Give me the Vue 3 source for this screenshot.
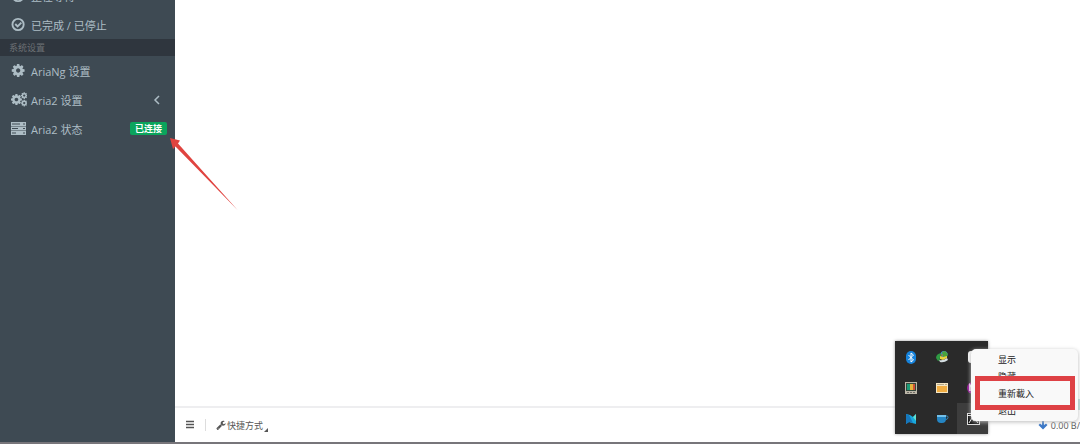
<template>
  <div class="page">
    <aside class="sidebar">
      <nav class="menu">
        <a v-for="item in taskItems" :key="item.label" href="#" class="menu-item">
          <svg class="icon" viewBox="0 0 16 16">
            <circle cx="7" cy="8" r="6" class="line" />
            <path :d="item.icon" class="line" />
          </svg>
          <span>{{ item.label }}</span>
        </a>
        <h2 class="menu-header">系统设置</h2>
        <a href="#" class="menu-item">
          <svg class="icon" viewBox="100 0 1792 1792"><path :d="cog" /></svg>
          <span>AriaNg 设置</span>
        </a>
        <a href="#" class="menu-item">
          <svg class="icon" viewBox="0 0 1920 1792">
            <path :d="cog" transform="translate(-120 130) scale(0.86)" />
            <path :d="cog" transform="translate(1120 -40) scale(0.52)" />
            <path :d="cog" transform="translate(1120 860) scale(0.52)" />
          </svg>
          <span>Aria2 设置</span>
          <svg class="angle" viewBox="0 0 8 10"><path d="M6 1 2 5l4 4" class="line" /></svg>
        </a>
        <a href="#" class="menu-item">
          <svg class="icon" viewBox="0 0 16 15">
            <path fill-rule="evenodd" d="M0 1h15v4H0zM1 2.500v1h8v-1zM12 2.500v1h2v-1zM0 5.500h15v4H0zM1 7v1h6V7zM12 7v1h2V7zM0 10h15v4H0zM1 11.500v1h4v-1zM12 11.500v1h2v-1z" />
          </svg>
          <span>Aria2 状态</span>
          <span class="badge">已连接</span>
        </a>
      </nav>
    </aside>

    <div class="main">
      <main class="content"></main>
      <footer class="toolbar">
        <button type="button" class="tool toggle" aria-label="菜单">
          <svg viewBox="0 0 10 10"><path d="M1 1.500h8M1 4.500h8M1 7.500h8" class="line" /></svg>
        </button>
        <button type="button" class="tool shortcut">
          <svg viewBox="0 0 1792 1792"><path :d="wrench" /></svg>
          <span>快捷方式</span>
          <i class="corner"></i>
        </button>
        <span class="speed">
          <svg viewBox="0 0 10 10"><path d="M4 1h2v4l2-1.500 1.500 1.500L5 9.500.5 5 2 3.500 4 5z" /></svg>
          <span>0.00 B/</span>
        </span>
      </footer>
    </div>

    <div class="tray">
      <button type="button" class="tray-item" aria-label="蓝牙">
        <svg viewBox="0 0 16 16">
          <rect x="3" y="2" width="10" height="13" rx="5" fill="#1683dc" />
          <path d="M5.500 6l5 5L8 13V4l2.500 2-5 5" fill="none" stroke="#fff" />
        </svg>
      </button>
      <button type="button" class="tray-item" aria-label="下载">
        <svg viewBox="0 0 16 16">
          <circle cx="10" cy="5.500" r="3.500" fill="#3f8fd0" />
          <path d="M8 3l3-1 3 3-2 4-3-1z" fill="#49a33c" />
          <path d="M2 9q0-4 5-5l1 3q-3 1-2 4l-2 1z" fill="#2f9a43" />
          <path d="M6 7l3 1 4-1v2l-4 2-3-1z" fill="#e8d23c" />
          <path d="M5 11q4 1 8-2l1 2q-4 3-8 2z" fill="#d5dfe2" />
          <path d="M7 5l2 1-1 1.500z" fill="#d56728" />
        </svg>
      </button>
      <button type="button" class="tray-item" aria-label="安全">
        <svg viewBox="0 0 16 16">
          <rect x="3" y="2" width="12" height="12" rx="3" fill="#f6f6f6" />
          <path d="M6 5h3M6 8h3M6 11h3" stroke="#555" />
        </svg>
      </button>
      <button type="button" class="tray-item" aria-label="显示器">
        <svg viewBox="0 0 16 16">
          <rect x="2" y="2" width="12" height="12" fill="#bcb6a8" />
          <rect x="3" y="3" width="10" height="8" fill="#34483c" />
          <rect x="4" y="4" width="3" height="6" fill="#1c9b78" />
          <rect x="7" y="4" width="3" height="6" fill="#e3b33c" />
          <rect x="10" y="4" width="2" height="6" fill="#cf5136" />
          <path d="M4 12.500h8" stroke="#716c66" stroke-dasharray="2 1" />
        </svg>
      </button>
      <button type="button" class="tray-item" aria-label="窗口">
        <svg viewBox="0 0 16 16">
          <rect x="2" y="3" width="12" height="10" fill="#f4e5c3" />
          <path d="M3 4.500h10" stroke="#b7a98a" stroke-dasharray="7 1" />
          <rect x="3" y="6" width="10" height="6" fill="#f1ad42" />
        </svg>
      </button>
      <button type="button" class="tray-item" aria-label="笔记">
        <svg viewBox="0 0 16 16">
          <circle cx="8" cy="8" r="6" fill="#9a1b9c" />
          <path d="M5 11V5l5 6V5" fill="none" stroke="#fff" stroke-width="1.500" />
        </svg>
      </button>
      <button type="button" class="tray-item" aria-label="网络">
        <svg viewBox="0 0 16 16">
          <path d="M3 3l4 1 3 2 3-3v10l-4-1-3-1-3 2z" fill="#19a8dc" />
          <path d="M3 3l3 1 4 8-4-1-3 2z" fill="#1677bd" />
          <path d="M10 6l3-3v7z" fill="#5fe0d2" />
        </svg>
      </button>
      <button type="button" class="tray-item" aria-label="咖啡">
        <svg viewBox="0 0 16 16">
          <path d="M3 4h9v4q0 4-4 4H7q-4 0-4-4z" fill="#2585c3" />
          <path d="M3 4h9v2H3z" fill="#73c0e9" />
          <path d="M12 5h1q1 0 1 1.500T12 8.500" fill="none" stroke="#348cc2" />
        </svg>
      </button>
      <button type="button" class="tray-item active" aria-label="Aria2">
        <svg viewBox="0 0 16 16">
          <rect x="2.500" y="2.500" width="12" height="11" fill="#111" stroke="#ddd" />
          <path d="M2 4.500h12M4 12l3-5 2 3 1-2 3 4" fill="none" stroke="#eee" />
        </svg>
      </button>
    </div>

    <div class="edge"></div>
    <div class="popup">
      <button v-for="label in popupItems" :key="label" type="button" class="popup-item">{{ label }}</button>
      <div class="highlight"></div>
    </div>

    <svg class="arrow" viewBox="0 0 70 74">
      <path d="M1 1l10 2.500-2 3L69 73.500 6.500 9.500 4 12z" />
    </svg>
  </div>
</template>

<script setup>
const taskItems = [
  { label: '正在等待', icon: 'M7 4.500V8l2.500 1.500' },
  { label: '已完成 / 已停止', icon: 'M4 7.500l2.500 2.500L10.500 6' },
]

const popupItems = ['显示', '隐藏', '重新載入', '退出']

const cog = 'M1152 896q0-106-75-181t-181-75-181 75-75 181 75 181 181 75 181-75 75-181zm512-109v222q0 12-8 23t-20 13l-185 28q-19 54-39 91 35 50 107 138 10 12 10 25t-9 23q-27 37-99 108t-94 71q-12 0-26-9l-138-108q-44 23-91 38-16 136-29 186-7 28-36 28h-222q-14 0-24.5-8.5t-11.5-21.5l-28-184q-49-16-90-37l-141 107q-10 9-25 9-14 0-25-11-126-114-165-168-7-10-7-23 0-12 8-23 15-21 51-66.5t54-70.5q-27-50-41-99l-183-27q-13-2-21-12.5t-8-23.5v-222q0-12 8-23t19-13l186-28q14-46 39-92-40-57-107-138-10-12-10-24 0-10 9-23 26-36 98.5-107.5t94.5-71.5q13 0 26 10l138 107q44-23 91-38 16-136 29-186 7-28 36-28h222q14 0 24.5 8.5t11.5 21.5l28 184q49 16 90 37l142-107q9-9 24-9 13 0 25 10 129 119 165 170 7 8 7 22 0 12-8 23-15 21-51 66.5t-54 70.5q26 50 41 98l183 28q13 2 21 12.5t8 23.5z'

const wrench = 'M448 1472q0-26-19-45t-45-19-45 19-19 45 19 45 45 19 45-19 19-45zm644-420l-682 682q-37 37-90 37-52 0-91-37l-106-108q-38-36-38-90 0-53 38-91l681-681q39 98 114.5 173.5t173.5 114.5zm634-435q0 39-23 106-47 134-164.5 217.5t-258.5 83.5q-185 0-316.5-131.5t-131.5-316.5 131.5-316.5 316.5-131.5q58 0 121.5 16.5t107.5 46.5q16 11 16 28t-16 28l-293 169v224l193 107q5-3 79-48.5t135.5-81 70.5-35.5q15 0 23.5 10t8.5 25z'
</script>

<style>
body {
  margin: 0;
  overflow: hidden;
}
</style>

<style scoped>
.page {
  position: relative;
  display: flex;
  height: 100vh;
  box-sizing: border-box;
  border-bottom: 2px solid #77757a;
  overflow: hidden;
  background: #fff;
  font-family: "Open Sans", "Noto Sans CJK SC", sans-serif;
  font-size: 11px;
}

button {
  border: 0;
  padding: 0;
  background: none;
  font: inherit;
  color: inherit;
}

svg {
  fill: currentColor;
}

.line {
  fill: none;
  stroke: currentColor;
  stroke-width: 2;
}

.sidebar {
  flex: none;
  width: 175px;
  background: #3e4a53;
  color: #adbdc5;
  overflow: hidden;
}

/* the list is scrolled, its first entry is partly out of view */
.menu {
  margin-top: -19px;
}

.menu-item {
  display: flex;
  align-items: center;
  height: 29px;
  padding: 0 8px 0 11px;
  color: inherit;
  text-decoration: none;
  white-space: nowrap;
}

.icon {
  width: 16px;
  height: 15px;
  margin-right: 4px;
}

.angle {
  width: 8px;
  height: 10px;
  margin-left: auto;
  margin-right: 6px;
}

.angle .line {
  stroke-width: 1.5;
}

.menu-header {
  margin: 0;
  padding-left: 9px;
  background: #2f363e;
  color: #6d7175;
  font-size: 9px;
  font-weight: 400;
  line-height: 17px;
}

.badge {
  margin-left: auto;
  padding: 0 5px;
  border-radius: 2px;
  background: #0ba45c;
  color: #fff;
  font-size: 9px;
  font-weight: 700;
  line-height: 13px;
}

.main {
  flex: 1;
  display: flex;
  flex-direction: column;
  min-width: 0;
}

.content {
  flex: 1;
}

.toolbar {
  display: flex;
  align-items: center;
  height: 34px;
  padding-left: 10px;
  border-top: 2px solid #eeeef0;
  color: #555;
  font-size: 9px;
}

.tool {
  display: flex;
  align-items: center;
}

.tool svg,
.speed svg {
  width: 10px;
  height: 10px;
}

.tool .line {
  stroke-width: 1.5;
}

.toggle {
  height: 12px;
  padding-right: 10px;
  border-right: 1px solid #ddd;
}

.shortcut {
  gap: 1px;
  margin-left: 10px;
}

.corner {
  align-self: flex-end;
  border-left: 4px solid transparent;
  border-bottom: 4px solid #555;
}

.speed {
  display: flex;
  align-items: center;
  gap: 3px;
  margin-left: auto;
}

.speed svg {
  color: #3b78c8;
}

.tray {
  position: absolute;
  right: 92px;
  bottom: 8px;
  display: grid;
  grid-template-columns: repeat(3, 31px);
  grid-auto-rows: 31px;
  background: #2a2a2a;
  box-shadow: 0 0 3px #999;
}

.tray-item {
  display: flex;
  align-items: center;
  justify-content: center;
}

.tray-item svg {
  width: 16px;
  height: 16px;
}

.active {
  background: #3d3d3d;
}

.edge {
  position: absolute;
  right: 0;
  bottom: 32px;
  width: 3px;
  height: 11px;
  background: #b9dcd8;
}

.popup {
  position: absolute;
  right: 2px;
  bottom: 21px;
  display: flex;
  flex-direction: column;
  width: 107px;
  padding: 2px 0;
  border-radius: 5px;
  background: #f9f9f9;
  box-shadow: 0 1px 4px #bbb;
  color: #222;
  font-size: 9px;
}

.popup-item {
  height: 17px;
  padding-left: 27px;
  text-align: left;
}

.highlight {
  position: absolute;
  top: 27px;
  left: 4px;
  right: 3px;
  height: 24px;
  border: 5px solid #de4145;
}

.arrow {
  position: absolute;
  top: 137px;
  left: 169px;
  width: 70px;
  height: 74px;
  color: #e04440;
}
</style>
